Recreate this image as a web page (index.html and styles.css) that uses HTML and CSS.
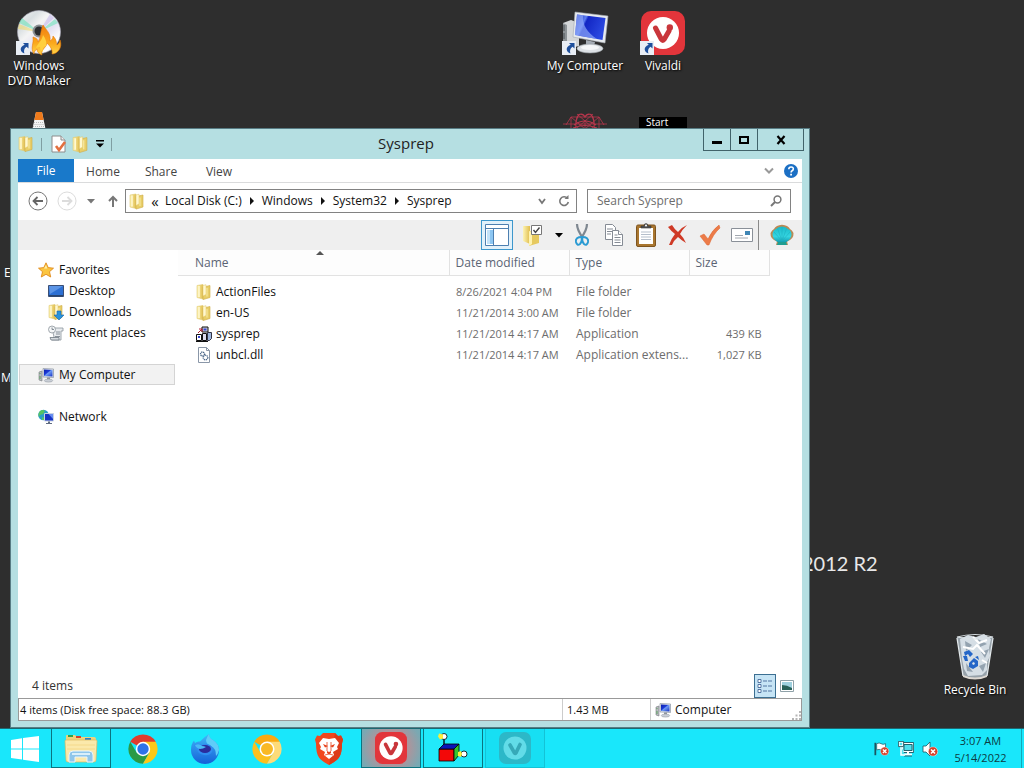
FILE: index.html
```html
<!DOCTYPE html>
<html lang="en">
	<head>
		<meta charset="utf-8" />
		<title>Sysprep</title>
		<link rel="stylesheet" href="styles.css">
	</head>
	<body>
		<!-- shared icons -->
		<svg class="defs" aria-hidden="true">
			<defs>
				<linearGradient id="gFolder" x1="0" x2="1"><stop offset="0" stop-color="#fdf3b4"/><stop offset="1" stop-color="#e0bd4c"/></linearGradient>
				<linearGradient id="gScreen" x1="0" x2="1" y2="1"><stop offset="0" stop-color="#0b1fa8"/><stop offset=".4" stop-color="#1c39d8"/><stop offset=".5" stop-color="#6f9cf5"/><stop offset="1" stop-color="#1230c4"/></linearGradient>
				<linearGradient id="gBig" x1="0" x2="1" y2=".4"><stop offset="0" stop-color="#0a18b4"/><stop offset=".35" stop-color="#5b7df0"/><stop offset=".42" stop-color="#1226c4"/><stop offset="1" stop-color="#2a48e0"/></linearGradient>
				<linearGradient id="gDisc" x1="0" x2="1" y2="1"><stop offset="0" stop-color="#f4f4f4"/><stop offset=".25" stop-color="#d9dfe2"/><stop offset=".4" stop-color="#f4f4f4"/><stop offset=".6" stop-color="#e4e1f2"/><stop offset=".8" stop-color="#ffffff"/><stop offset="1" stop-color="#a8b4c0"/></linearGradient>
				<linearGradient id="gFlame" x2="0" y2="1"><stop offset="0" stop-color="#ef7d10"/><stop offset=".6" stop-color="#fba81c"/><stop offset="1" stop-color="#ffd84a"/></linearGradient>
				<linearGradient id="gFox" x2="0" y2="1"><stop offset="0" stop-color="#3fb8f8"/><stop offset="1" stop-color="#1560d8"/></linearGradient>
				<linearGradient id="gShell" x2="0" y2="1"><stop offset="0" stop-color="#18b9c8"/><stop offset=".6" stop-color="#35d6e2"/><stop offset="1" stop-color="#0f93a8"/></linearGradient>
				<symbol id="folder" viewBox="0 0 16 16">
					<path d="M1 1.500L7 .5v14.500l-6-1.500z" fill="url(#gFolder)" stroke="#e0c972" stroke-width=".6"/>
					<path d="M3 2v11" stroke="#fff9d2" stroke-width="1.500"/>
					<path d="M7 3l7-1.500v12L7 15.600z" fill="#e8ce68" stroke="#cfab45" stroke-width=".6"/>
					<path d="M7 1.500l3-.8v9.800l-3 1.500z" fill="#fff8cf" stroke="#e3c664" stroke-width=".5"/>
					<path d="M11 4v8.500" stroke="#f6e59a" stroke-width="1.300"/>
				</symbol>
				<symbol id="computer" viewBox="0 0 16 16">
					<path d="M1 5l3-1v10l-3-1z" fill="#b9bcc0" stroke="#777b80" stroke-width=".6"/>
					<path d="M2 6v1M2 9v3" stroke="#46a04a" stroke-width=".8"/>
					<path d="M5 1.500l10.500.5v8.500L5 10z" fill="#dfe3ea" stroke="#8d96a3" stroke-width=".7"/>
					<path d="M6 2.500l8.500.4v6.600L6 9.100z" fill="url(#gScreen)"/>
					<path d="M9 10.500h3v2H9z" fill="#8e949c"/>
					<ellipse cx="10.500" cy="13.600" rx="4.200" ry="1.500" fill="#c9ced6" stroke="#8b929b" stroke-width=".5"/>
				</symbol>
				<symbol id="bigcomputer" viewBox="0 0 48 44">
					<path d="M2 12l8-3 8 3v23l-8 2-8-4z" fill="#d3d6d8"/>
					<path d="M2 12l4 2v21l-4-2z" fill="#8c9296"/>
					<path d="M3 14v6M3 22v6" stroke="#4a5054"/>
					<path d="M14 1l33 4-3 27-32-6z" fill="#e7ebef" stroke="#a4aab0" stroke-width=".6"/>
					<path d="M16 3.500l28.500 3.500-3 22-27.500-5z" fill="url(#gBig)"/>
					<path d="M16 3.500l6 .7c-1 9 4 17 14 23.800L14 24z" fill="#8fa9fa" opacity=".7"/>
					<path d="M25 29l9 2-1 4h-8z" fill="#a5acb4"/>
					<ellipse cx="29" cy="37.500" rx="13" ry="4.500" fill="#dde1e5" stroke="#949aa0" stroke-width=".6"/>
					<ellipse cx="29" cy="36.500" rx="9" ry="2.400" fill="#f5f7f8"/>
				</symbol>
				<symbol id="shortcut" viewBox="0 0 14 14">
					<path d="M0 0h14v14H0z" fill="#e9eef5"/>
					<path d="M7 2h5.500v5.500L10.600 5.800C8 7.400 7.600 9.600 8.400 12.600 4.300 11 2.600 6.600 8.700 3.800z" fill="#1e4f9c"/>
				</symbol>
				<symbol id="vivaldi" viewBox="0 0 44 44">
					<rect width="44" height="44" rx="10" fill="#e2353b"/>
					<circle cx="22" cy="22" r="16" fill="#fff"/>
					<path d="M14.500 17l6 11.500q1.300 2 2.600 0L28 20" fill="none" stroke="#c9363b" stroke-width="5" stroke-linecap="round" stroke-linejoin="round"/>
					<circle cx="28.800" cy="16.500" r="3.200" fill="#c9363b"/>
				</symbol>
				<symbol id="disc" viewBox="0 0 48 48">
					<circle cx="24" cy="23" r="21.500" fill="url(#gDisc)" stroke="#aab" stroke-width=".6"/>
					<path d="M24 23L4 14l3-5zM24 23l19-9-3-4z" fill="#6fe3bb" opacity=".6"/>
					<path d="M24 23L3 20l1-5z" fill="#f0d858" opacity=".5"/>
					<path d="M24 23L35 5l4 4z" fill="#b7a4e8" opacity=".4"/>
					<circle cx="24" cy="22" r="6.500" fill="#8b9094"/>
					<circle cx="24" cy="22" r="4.500" fill="#2b2d30"/>
					<path d="M19 45c-4-6 0-10-1-17 4 1 5 3 5 5 3-4 2-10 5-17 3 5 8 8 7 16 2-1 3-3 3-5 4 4 3 7 4 9 1-1 3-3 3-5 3 8-3 14-8 14 1-4-2-8-5-11 0 4-7 7-5 12-3-1-5-3-5-6-2 1-3 3-3 5z" fill="url(#gFlame)" stroke="#e77a0c" stroke-width=".6"/>
					<path d="M21 39c1-4 6-7 7-13 3 4 4 8 3 11-3 1-4 4-3 6-2-1-3-3-3-5-2 0-3 1-4 1z" fill="#ffcf3e"/>
				</symbol>
				<symbol id="redx" viewBox="0 0 10 10">
					<circle cx="5" cy="5" r="4.700" fill="#d6402b" stroke="#fff" stroke-width=".5"/>
					<path d="M3 3l4 4M7 3L3 7" stroke="#fff" stroke-width="1.500"/>
				</symbol>
			</defs>
		</svg>

		<main class="desktop">
			<p class="brand">2012 R2</p>

			<a class="shortcut dvd" href="#">
				<span class="pic">
					<svg width="48" height="48"><use href="#disc"/></svg>
					<svg class="arrow" width="14" height="14"><use href="#shortcut"/></svg>
				</span>
				Windows<br>DVD Maker
			</a>
			<a class="shortcut mycomputer" href="#">
				<span class="pic">
					<svg width="48" height="44"><use href="#bigcomputer"/></svg>
					<svg class="arrow" width="14" height="14"><use href="#shortcut"/></svg>
				</span>
				My Computer
			</a>
			<a class="shortcut viv" href="#">
				<span class="pic">
					<svg width="44" height="44"><use href="#vivaldi"/></svg>
					<svg class="arrow" width="14" height="14"><use href="#shortcut"/></svg>
				</span>
				Vivaldi
			</a>
			<a class="shortcut bin" href="#">
				<span class="pic">
					<svg width="44" height="48" viewBox="3 0 42 48">
						<path d="M6 4h36l-6 39q-12 5-24 0z" fill="#a9b6c0" opacity=".85"/>
						<path d="M9 6l8-4 8 2 8-3 7 5-2 9 1 8-3 6 0 8-5 5-14 1-4-7-2-10z" fill="#d5dee5"/>
						<path d="M14 8l7 4-6 6zM27 6l9 5-7 3zM30 19l8-3-4 9zM15 30l7 9-6-1zM28 33l7-3-3 9z" fill="#94a3b0"/>
						<path d="M22 4l6 6 8-3M12 14l10 2 4-4 8 9M31 27l5 3" fill="none" stroke="#fff" stroke-width="2"/>
						<path d="M6 4q18-5 36 0q-18 4-36 0z" fill="none" stroke="#d9e0e4" stroke-width="1.200"/>
						<path d="M6 5l6 38M42 5l-6 38" stroke="#e3e9ec" stroke-width="1.300"/>
						<path d="M12 42q12 5 24 0v2q-12 5-24 0z" fill="#ddd8d2"/>
						<path d="M13 19l5-2 4 4-3 3-2-3-3 2zM12 23l4 0 1 5-3 0zM18 30l5-5 4 3 0 5-5 3-4-2zM24 24l3-1 1 4z" fill="#2466c8"/>
						<path d="M21 30l2-1 1 2-2 1z" fill="#dfe7ec"/>
					</svg>
				</span>
				Recycle Bin
			</a>

			<!-- things that peek out from behind the window -->
			<svg class="peek cone" width="16" height="24" viewBox="0 0 16 24">
				<path d="M5 0h6l5 24H0z" fill="#f4f4f4"/>
				<path d="M5 0q3-1 6 0l1.600 8H3.400z" fill="#ee7a1b"/>
				<path d="M3 10.500h10M2.500 12.500h11M2 14.500h12" stroke="#bbb" stroke-dasharray="1 1"/>
			</svg>
			<svg class="peek atom" width="44" height="40" viewBox="0 0 44 40" fill="none" stroke="#b8364c">
				<path d="M8 6h28M0 13h44M8 6L3 14M36 6l5 8M8 6l14 12L36 6M14 3l16 14M30 3L14 17M22 9v10M8 6v12M36 6v12" stroke-width=".8"/>
				<path d="M13 18Q12 8 16 3.500 20 2 22 6q2-4 6-2.500 4 4.500 3 14.500M11 14q11-8 22 0M10 17q12-5 24 0" stroke-width="1.200"/>
			</svg>
			<span class="peek tile">Start</span>
			<span class="peek letter-e">E</span>
			<span class="peek letter-m">M</span>

			<section class="window">
				<header class="titlebar">
					<div class="quick">
						<svg width="16" height="16"><use href="#folder"/></svg>
						<i class="bar"></i>
						<button aria-label="Properties">
							<svg width="16" height="18" viewBox="0 0 16 18"><path d="M1 1h9l4 4v12H1z" fill="#fff" stroke="#8c8c8c"/><path d="M10 1v4h4" fill="#eee" stroke="#8c8c8c"/><path d="M5 11l3 4 6-8" fill="none" stroke="#e2703f" stroke-width="2.600"/></svg>
						</button>
						<button aria-label="New folder"><svg width="17" height="17"><use href="#folder"/></svg></button>
						<button class="customize" aria-label="Customize Quick Access Toolbar">
							<svg width="8" height="8" viewBox="0 0 8 8"><path d="M0 0h8v1.500H0zM0 3.500h8L4 7.500z"/></svg>
						</button>
						<i class="bar"></i>
					</div>
					<h1>Sysprep</h1>
					<div class="caption">
						<button aria-label="Minimize"><svg width="10" height="10" viewBox="0 0 10 10"><path d="M0 6h10v3H0z"/></svg></button>
						<button aria-label="Maximize"><svg width="10" height="10" viewBox="0 0 10 10"><path d="M1 2h8v6H1z" fill="none" stroke="#000" stroke-width="2"/></svg></button>
						<button class="close" aria-label="Close"><svg width="10" height="10" viewBox="0 0 10 10"><path d="M1.500 1l7 8M8.500 1l-7 8" stroke="#000" stroke-width="2.200"/></svg></button>
					</div>
				</header>

				<div class="client">
					<nav class="ribbon">
						<button class="file">File</button>
						<button>Home</button>
						<button>Share</button>
						<button>View</button>
						<span class="grow"></span>
						<button class="mini" aria-label="Expand the Ribbon"><svg width="10" height="8" viewBox="0 0 10 8"><path d="M1 1.500l4 4 4-4" fill="none" stroke="#999" stroke-width="2"/></svg></button>
						<button class="mini" aria-label="Help">
							<svg width="14" height="14" viewBox="0 0 14 14"><circle cx="7" cy="7" r="7" fill="#1b6fc4"/><path d="M4.800 5.200q0-2.200 2.300-2.200t2.200 2q0 1.200-1.200 1.800-1 .5-1 1.700" fill="none" stroke="#fff" stroke-width="1.600"/><path d="M6.200 9.800h1.800v1.700H6.200z" fill="#fff"/></svg>
						</button>
					</nav>

					<div class="address">
						<button class="nav" aria-label="Back"><svg width="20" height="20" viewBox="0 0 20 20"><circle cx="10" cy="10" r="9" fill="none" stroke="#777"/><path d="M15 10H6M9.500 6L5.500 10l4 4" fill="none" stroke="#666" stroke-width="1.800"/></svg></button>
						<button class="nav" aria-label="Forward"><svg width="20" height="20" viewBox="0 0 20 20"><circle cx="10" cy="10" r="9" fill="none" stroke="#dcdcdc"/><path d="M5 10h9M10.500 6l4 4-4 4" fill="none" stroke="#dcdcdc" stroke-width="1.800"/></svg></button>
						<button class="nav recent" aria-label="Recent locations"><svg width="8" height="5" viewBox="0 0 8 5"><path d="M0 0h8L4 4.500z" fill="#777"/></svg></button>
						<button class="nav up" aria-label="Up"><svg width="10" height="12" viewBox="0 0 10 12"><path d="M5 12V2M1 6l4-4 4 4" fill="none" stroke="#777" stroke-width="2"/></svg></button>
						<div class="path">
							<svg width="16" height="17"><use href="#folder"/></svg>
							<button class="back2">«</button>
							<button>Local Disk (C:)</button><i class="tri"></i>
							<button>Windows</button><i class="tri"></i>
							<button>System32</button><i class="tri"></i>
							<button>Sysprep</button>
							<span class="grow"></span>
							<button aria-label="Previous locations"><svg width="8" height="7" viewBox="0 0 8 7"><path d="M1 1l3 4 3-4" fill="none" stroke="#777" stroke-width="1.800"/></svg></button>
							<button class="refresh" aria-label="Refresh"><svg width="12" height="12" viewBox="0 0 12 12"><path d="M9.500 3.500A4.300 4.300 0 1 0 10.300 7" fill="none" stroke="#777" stroke-width="1.600"/><path d="M6.500 4h4V0z" fill="#777"/></svg></button>
						</div>
						<label class="search">
							<input type="text" placeholder="Search Sysprep" aria-label="Search Sysprep">
							<svg width="12" height="12" viewBox="0 0 12 12"><circle cx="7.500" cy="4.500" r="3.400" fill="none" stroke="#777" stroke-width="1.500"/><path d="M5 7L1 11" stroke="#777" stroke-width="2"/></svg>
						</label>
					</div>

					<div class="toolbar">
						<button class="on" aria-label="Navigation pane">
							<svg width="24" height="22" viewBox="0 0 24 22"><path d="M.5.500h23v21H.5z" fill="#fff" stroke="#4d7fb0"/><path d="M1 4.500h22" stroke="#4d7fb0"/><path d="M2 6h6v14H2z" fill="#8cc6f2"/><path d="M2 6h3v14H2z" fill="#c4e2f8"/><path d="M8.500 5v16" stroke="#4d7fb0"/></svg>
						</button>
						<button class="options" aria-label="Folder options">
							<svg width="22" height="24" viewBox="0 0 22 24"><path d="M1 3h7v18l-7-3z" fill="url(#gFolder)"/><path d="M7 8l10 1v11l-10 3z" fill="#e6c95f"/><path d="M7 8l3 1v12l-3 2z" fill="#fff3b0"/><path d="M9.500 2.500h10v9h-10z" fill="#fff" stroke="#777"/><path d="M11.500 7l2 2.500 4-5" fill="none" stroke="#444" stroke-width="1.400"/></svg>
						</button>
						<button class="drop" aria-label="More options"><svg width="8" height="5" viewBox="0 0 8 5"><path d="M0 0h8L4 4.500z"/></svg></button>
						<button aria-label="Cut">
							<svg width="16" height="24" viewBox="0 0 16 24"><path d="M3 1q0 6 6 14M13 1q0 6-6 14" fill="none" stroke="#7e8790" stroke-width="2.200"/><path d="M8 14Q1 14 2 19q1 4 4 2 2-2 2-7M8 14q7 0 6 5-1 4-4 2-2-2-2-7" fill="none" stroke="#2b9bd3" stroke-width="2"/></svg>
						</button>
						<button aria-label="Copy">
							<svg width="20" height="24" viewBox="0 0 20 24"><g fill="#fff" stroke="#858b94"><path d="M1.500 1.500h7l3 3v12h-10z"/><path d="M3 6h6M3 8.500h6M3 11h4"/><path d="M8.500 7.500h6l4 4v11h-10z"/><path d="M14.500 7.500v4h4M10.500 12h3M10.500 14.500h6M10.500 17h6M10.500 19.500h6"/></g></svg>
						</button>
						<button aria-label="Paste">
							<svg width="20" height="24" viewBox="0 0 20 24"><rect x=".5" y="2" width="19" height="21.500" rx="1.500" fill="#a9762f" stroke="#7e5520"/><path d="M3 5h14v16H3z" fill="#fff"/><path d="M5 9h10M5 11.500h10M5 14h10M5 16.500h10" stroke="#b5bfcb"/><path d="M5 5V3h3q0-2.500 2-2.500T12 3h3v2z" fill="#555" stroke="#333" stroke-width=".6"/><circle cx="10" cy="2.500" r="1" fill="#fff"/></svg>
						</button>
						<button aria-label="Delete">
							<svg width="22" height="22" viewBox="0 0 22 22"><path d="M1 3l4-2q3 5 6 7 4-5 9-7-5 5-7 9 4 4 6 9-5-3-8-6-4 3-6 8H2q2-6 6-11-4-3-7-7z" fill="#cf3a26"/></svg>
						</button>
						<button aria-label="Properties">
							<svg width="22" height="22" viewBox="0 0 22 22"><path d="M1 12l4-2 4 5Q13 6 20 1l1 3Q14 10 10 21H8z" fill="#ec7b48" stroke="#dc6632" stroke-width=".5"/></svg>
						</button>
						<button aria-label="Rename">
							<svg width="22" height="14" viewBox="0 0 22 14"><path d="M.5.500h21v13H.5z" fill="#fff" stroke="#8a9098"/><path d="M14 3h5v4h-5z" fill="#3f86b5"/><path d="M4 7.500h8M4 10h13" stroke="#a2a8b0"/></svg>
						</button>
						<i class="sep"></i>
						<button aria-label="Classic Shell">
							<svg width="24" height="22" viewBox="0 0 24 22"><path d="M7 17.500Q0 15 .5 9 2 6 4 5 6 1 12 .7 18 1 20 5q2 1 3.500 4 .5 6-6.500 8.500l1 3.500H6z" fill="#b98a56"/><path d="M9 19Q2 15 2.500 10q.5-4 3.500-5 2-2.500 6-2.500T18 5q3 1 3.500 5 .5 5-6.500 9z" fill="url(#gShell)"/><path d="M12 17V3M12 17L7.500 4.500M12 17l4.500-12.500M12 17L4 8M12 17l8-9" stroke="#1fb0c0" stroke-width=".6"/><path d="M8 18h8l1 3H7z" fill="#1f9e92"/></svg>
						</button>
					</div>

					<div class="body">
						<nav class="tree">
							<a href="#">
								<svg width="16" height="16" viewBox="0 0 16 16"><path d="M8 .8l2.200 4.800 5.300.6-4 3.500 1.200 5.300L8 12.300 3.300 15l1.200-5.300-4-3.500 5.300-.6z" fill="#fbc540" stroke="#e08a1c" stroke-width=".9"/><path d="M8 3l1.300 3.500H6z" fill="#fff0a8"/></svg>
								Favorites
							</a>
							<a class="sub" href="#">
								<svg width="16" height="16" viewBox="0 0 16 16"><path d="M.5 2.500h15v11H.5z" fill="#2d70d3" stroke="#3b4f75"/><path d="M1 3h14L2 11z" fill="#5c95e6"/><path d="M1 12h14v1.500H1z" fill="#29456f"/></svg>
								Desktop
							</a>
							<a class="sub" href="#">
								<svg width="16" height="16" viewBox="0 0 16 16"><use href="#folder"/><path d="M9 7h4v4h3l-5 5-5-5h3z" fill="#2892dd" stroke="#1766a8" stroke-width=".6"/></svg>
								Downloads
							</a>
							<a class="sub" href="#">
								<svg width="16" height="16" viewBox="0 0 16 16"><path d="M4 3h11v3h-2v9H4l2-3z" fill="#e8ebee" stroke="#8b949c" stroke-width=".8"/><circle cx="4" cy="4.500" r="3.500" fill="#f4f6f7" stroke="#8b949c" stroke-width=".8"/><path d="M4 2.500v2h2M8 7h4M8 9h4M7 11.500h5M2 12.500h9v2.500H3z" fill="#d6dbdf" stroke="#707a83" stroke-width=".8"/></svg>
								Recent places
							</a>
							<a class="group current" href="#"><svg width="16" height="16"><use href="#computer"/></svg>My Computer</a>
							<a class="group" href="#">
								<svg width="16" height="16" viewBox="0 0 16 16"><circle cx="5.500" cy="6" r="5.300" fill="#2a9fc7"/><path d="M2 2q3-2 5 0L5 5 2 6 1 8Q-.5 5 2 2zM4 8l3 1-1 2H4z" fill="#56c364"/><path d="M6.500 4.500h9v7.500h-9z" fill="#1733c4" stroke="#c8d2e2"/><path d="M10.500 5h4.500v5z" fill="#668cf0"/><path d="M10 12.500h2v1.500h2v1H8v-1h2z" fill="#5f6b80"/></svg>
								Network
							</a>
						</nav>

						<div class="list">
							<table>
								<colgroup><col class="c-name"><col class="c-date"><col class="c-type"><col class="c-size"></colgroup>
								<thead>
									<tr><th class="sorted">Name</th><th>Date modified</th><th>Type</th><th>Size</th></tr>
								</thead>
								<tbody>
									<tr><td><span class="cell"><svg width="16" height="16"><use href="#folder"/></svg>ActionFiles</span></td><td>8/26/2021 4:04 PM</td><td>File folder</td><td></td></tr>
									<tr><td><span class="cell"><svg width="16" height="16"><use href="#folder"/></svg>en-US</span></td><td>11/21/2014 3:00 AM</td><td>File folder</td><td></td></tr>
									<tr>
										<td><span class="cell">
											<svg width="16" height="16" viewBox="0 0 16 16"><path d="M6 1h6v5H6z" fill="#c9cdd8" stroke="#111"/><path d="M7.500 2.500h3v2h-3z" fill="#3546d0"/><path d="M.5 8.500h5v6h-5z" fill="#fff" stroke="#111"/><path d="M2 10h2v2H2z" fill="#3546d0"/><path d="M6.500 7.500h4v7h-4z" fill="#dde" stroke="#111"/><path d="M11.500 6.500h4v6l-2 2h-2z" fill="#9db6dd" stroke="#334"/><path d="M2 7l4-4M3 3h3v3" fill="none" stroke="#b02030"/><path d="M0 15.500h12" stroke="#111"/></svg>
											sysprep</span></td>
										<td>11/21/2014 4:17 AM</td><td>Application</td><td>439 KB</td>
									</tr>
									<tr>
										<td><span class="cell">
											<svg width="16" height="16" viewBox="0 0 16 16"><path d="M2.500.500h8l3 3v12h-11z" fill="#fff" stroke="#8a97a8"/><path d="M10.500.500v3h3" fill="none" stroke="#8a97a8"/><circle cx="6.500" cy="7" r="2" fill="none" stroke="#4b6688" stroke-width="1.300" stroke-dasharray="1.200 .6"/><circle cx="9.500" cy="10.500" r="2.300" fill="none" stroke="#4b6688" stroke-width="1.300" stroke-dasharray="1.200 .6"/></svg>
											unbcl.dll</span></td>
										<td>11/21/2014 4:17 AM</td><td>Application extens...</td><td>1,027 KB</td>
									</tr>
								</tbody>
							</table>
						</div>
					</div>

					<div class="details">
						<span>4 items</span>
						<span class="grow"></span>
						<button class="on" aria-label="Details view">
							<svg width="16" height="16" viewBox="0 0 16 16"><g fill="#fff" stroke="#46699a" stroke-width=".9"><path d="M1 1.500h3v3H1zM1 6.500h3v3H1zM1 11.500h3v3H1z"/><path d="M6 3h4M11 3h4M6 8h4M11 8h4M6 13h4M11 13h4"/></g></svg>
						</button>
						<button aria-label="Large icons view">
							<svg width="14" height="12" viewBox="0 0 14 12"><path d="M.5.500h13v11H.5z" fill="#fff" stroke="#8fa1a8"/><path d="M2 2h10v8H2z" fill="#9ed0de"/><path d="M2 5q5 0 10 3v2H2z" fill="#286058"/></svg>
						</button>
					</div>

					<footer class="status">
						<span class="grow free">4 items (Disk free space: 88.3 GB)</span>
						<span class="size">1.43 MB</span>
						<span class="zone"><svg width="16" height="16"><use href="#computer"/></svg>Computer
							<svg class="grip" width="9" height="9" viewBox="0 0 9 9"><path d="M7 0h2v2H7zM7 3.500h2v2H7zM3.500 3.500h2v2h-2zM7 7h2v2H7zM3.500 7h2v2h-2zM0 7h2v2H0z" fill="#b5b5b5"/></svg>
						</span>
					</footer>
				</div>
			</section>
		</main>

		<footer class="taskbar">
			<button class="start" aria-label="Start">
				<svg width="28" height="26" viewBox="0 0 28 26" fill="#fff"><path d="M0 4l11-1.700V12.400H0zM12 2.100L28 0v12.400H12zM0 13.600h11v10L0 22zM12 13.600h16V26l-16-2.200z"/></svg>
			</button>
			<button class="open" aria-label="File Explorer">
				<svg width="34" height="30" viewBox="0 0 34 30"><path d="M2 3q0-1 1-1h8l2 2h17q2 0 2 2v20q0 2-2 2H4q-2 0-2-2z" fill="#efd27c"/><path d="M4 2h5v2H4z" fill="#2fa24a"/><path d="M12 3h5v2h-5z" fill="#d3402d"/><path d="M21 5h6v2h-6z" fill="#2f7fc4"/><path d="M1 8q0-1 1-1h30q1 0 1 1l-1 19q0 2-2 2H4q-2 0-2-2z" fill="#fbe9ab" stroke="#dcb95f" stroke-width=".7"/><path d="M3 12h28M3 16h28" stroke="#f4d98b"/><path d="M5 29v-7q0-4 4-4h16q4 0 4 4v7h-6v-5H11v5z" fill="#8fc6ea" stroke="#e9f5fc"/><path d="M8 21h18" stroke="#d9effa" stroke-width="2"/></svg>
			</button>
			<button aria-label="Google Chrome">
				<svg width="30" height="30" viewBox="0 0 30 30"><path d="M15 15L2.300 7.700A14.700 14.700 0 0 1 27.700 7.700z" fill="#e03b2e"/><path d="M2.300 7.700A14.700 14.700 0 0 0 15 29.700L21.300 18.700 8.700 18.700z" fill="#2a9a46"/><path d="M27.700 7.700H15l6.300 11L15 29.700A14.700 14.700 0 0 0 27.700 7.700z" fill="#fbc818"/><circle cx="15" cy="15" r="7.200" fill="#fff"/><circle cx="15" cy="15" r="5.700" fill="#2f73e8"/></svg>
			</button>
			<button aria-label="Firefox Developer Edition">
				<svg width="30" height="32" viewBox="0 0 30 32"><path d="M1 17Q1 11 4 7.500l1 2.500q2-2 5-1.500Q14 4 19 1q0 4 4 6 6 4 6 10A14 14 0 0 1 1 17z" fill="url(#gFox)"/><path d="M19 1q0 4 4 6 6 4 6 10-1 4-3 6 0-8-5-10t-5-6q1-3 3-6z" fill="#5fccf8"/><path d="M4 12q4-3 8 0 4-2 8 0 4 3 2 7-3 4-8 3-6-1-7-5-3-2-3-5z" fill="#2f8cf0"/><ellipse cx="15" cy="16" rx="6" ry="4" fill="#2a2c9c"/><path d="M5 12q4-2 7 1 2 0 4 1-3 2-6 2-4-1-5-4z" fill="#48baf6"/></svg>
			</button>
			<button aria-label="Chrome Canary">
				<svg width="30" height="30" viewBox="0 0 30 30"><path d="M15 15L2.300 7.700A14.700 14.700 0 0 1 27.700 7.700z" fill="#f8a912"/><path d="M2.300 7.700A14.700 14.700 0 0 0 15 29.700L21.300 18.700 8.700 18.700z" fill="#fbc01f"/><path d="M27.700 7.700H15l6.300 11L15 29.700A14.700 14.700 0 0 0 27.700 7.700z" fill="#fddb78"/><circle cx="15" cy="15" r="7.500" fill="#fff"/><circle cx="15" cy="15" r="6" fill="#f9b924"/></svg>
			</button>
			<button aria-label="Brave">
				<svg width="28" height="32" viewBox="0 0 28 32"><path d="M8 0h12l3 3 3-.5 2 4-1 4q0 10-3 14-2 3-10 7.500-8-4.500-10-7.500-3-4-3-14l-1-4 2-4L5 3z" fill="#f1471d"/><path d="M20 0l3 3 3-.5 2 4-1 4q0 10-3 14-2 3-10 7.500z" fill="#dd3b19"/><path d="M8 5l6 1 6-1 4 5-2 4 1 2-5 3 1 3-5 4-5-4 1-3-5-3 1-2-2-4z" fill="#fff"/><path d="M8 11l5 2-3 1.500zM20 11l-5 2 3 1.500zM12 18l2 1 2-1v2l-2 1.500-2-1.500z" fill="#e6421c"/><path d="M12 9v9M16 9v9M10 22l4-1 4 1" fill="none" stroke="#e6421c" stroke-width=".8"/></svg>
			</button>
			<button class="open active" aria-label="Vivaldi"><svg width="32" height="32"><use href="#vivaldi"/></svg></button>
			<button class="open" aria-label="Classic cube">
				<svg width="30" height="30" viewBox="0 0 30 30" stroke="#000" stroke-width=".8"><path d="M6 4v9M20 21h5" stroke-width="1.300"/><path d="M1 16h15v12H1z" fill="#f30808"/><path d="M1 16l5-5h15l-5 5z" fill="#0a14b8"/><path d="M16 16l5-5v11l-5 6z" fill="#35c52c"/><circle cx="6" cy="3.500" r="3" fill="#fff"/><path d="M5 1.500L1 .5l-1 3 2 3 3-1z" fill="#f8ef3c" stroke="none"/><circle cx="26" cy="21" r="3" fill="#fff"/><path d="M23 18l-3 1v4l3 1 1-3z" fill="#f8ef3c" stroke="none"/></svg>
			</button>
			<button class="open faded" aria-label="Vivaldi background">
				<svg width="32" height="32" viewBox="0 0 32 32"><rect width="32" height="32" rx="7" fill="#2cb8c8"/><circle cx="16" cy="16" r="11.500" fill="#62dce8"/><path d="M11 13l4.500 8q.7 1 1.400 0L21 12.500" fill="none" stroke="#36a9b8" stroke-width="3.600" stroke-linecap="round"/></svg>
			</button>
			<span class="grow"></span>
			<div class="tray">
				<button aria-label="Action Center">
					<svg width="16" height="16" viewBox="0 0 18 16"><path d="M1.500 1v14" stroke="#1c5560" stroke-width="2"/><path d="M3 2q3-1.500 5 0t5 0v7q-3 1-5 0t-5 0z" fill="#fff" stroke="#1c5560" stroke-width=".8"/><svg x="7" y="5.500" width="10" height="10"><use href="#redx"/></svg></svg>
				</button>
				<button aria-label="Network">
					<svg width="16" height="16" viewBox="0 0 16 16"><path d="M4.500 2.500h11v8h-11z" fill="#4fe0ee" stroke="#fff" stroke-width="1.600"/><path d="M3.600 1.500h12v10H3.600M6 3.500h8v6H6z" fill="none" stroke="#1c5560" stroke-width=".9"/><path d="M10 11v2M6 13.500h8" stroke="#fff" stroke-width="2"/><path d="M6 15h8" stroke="#1c5560" stroke-width=".9"/><path d="M1 1h4v4H1zM3 5v9h4" fill="#4fe0ee" stroke="#fff" stroke-width="1.500"/><path d="M.4.400h5.200v5.200H.4z" fill="none" stroke="#1c5560" stroke-width=".9"/></svg>
				</button>
				<button aria-label="Volume">
					<svg width="16" height="16" viewBox="0 0 16 16"><path d="M1 5h3l4-4v14l-4-4H1z" fill="#fff" stroke="#1c5560" stroke-width=".8"/><svg x="6" y="5.500" width="10" height="10"><use href="#redx"/></svg></svg>
				</button>
			</div>
			<button class="clock">3:07 AM<br>5/14/2022</button>
		</footer>
	</body>
</html>
```
FILE: styles.css
```css
* {
	padding: 0;
	margin: 0;
	box-sizing: border-box;
}

body {
	height: 100vh;
	display: flex;
	flex-direction: column;
	overflow: hidden;
	background-color: #2e2e2e;
	font: 12px/16px "Open Sans", "Noto Sans", sans-serif;
	color: #111;
}

button,
input {
	font: inherit;
	color: inherit;
	background: none;
	border: 0;
}

button {
	display: flex;
	align-items: center;
	justify-content: center;
}

a {
	color: inherit;
	text-decoration: none;
}

svg {
	display: block;
	flex: none;
}

.defs {
	position: absolute;
	width: 0;
	height: 0;
}

.grow {
	flex: 1;
}

/* desktop */
.desktop {
	flex: 1;
	position: relative;
	min-height: 0;
}

.brand {
	position: absolute;
	left: 802px;
	top: 550px;
	font-family: Lato, sans-serif;
	font-size: 20px;
	line-height: 26px;
	color: #e8e8e8;
}

.shortcut {
	position: absolute;
	width: 78px;
	text-align: center;
	line-height: 15px;
	color: #fff;
	text-shadow: 1px 1px 2px #000;
}

.shortcut .pic {
	position: relative;
	display: flex;
	align-items: center;
	justify-content: center;
	height: 50px;
}

.shortcut .arrow {
	position: absolute;
	left: 16px;
	bottom: 3px;
}

.dvd {
	left: 0;
	top: 8px;
}

.mycomputer {
	left: 546px;
	top: 8px;
}

.viv {
	left: 624px;
	top: 8px;
}

.bin {
	right: 10px;
	bottom: 31px;
}

.peek {
	position: absolute;
	color: #fff;
}

.cone {
	left: 31px;
	top: 112px;
}

.atom {
	left: 563px;
	top: 111px;
}

.tile {
	left: 639px;
	top: 117px;
	width: 48px;
	height: 24px;
	padding-left: 7px;
	background-color: #000;
	font-size: 10px;
	line-height: 11px;
}

.letter-e {
	left: 4px;
	top: 265px;
}

.letter-m {
	left: 1px;
	top: 370px;
}

/* explorer window */
.window {
	position: absolute;
	left: 10px;
	right: 214px;
	top: 128px;
	bottom: 0;
	display: flex;
	flex-direction: column;
	padding: 0 7px 6px;
	background-color: #b5dfe2;
	border: 1px solid #587c84;
}

.titlebar {
	display: grid;
	grid-template-columns: 1fr auto 1fr;
	height: 30px;
}

.titlebar h1 {
	padding-right: 8px;
	font-size: 15px;
	line-height: 29px;
	font-weight: normal;
	color: #222;
}

.quick {
	display: flex;
	align-items: center;
	gap: 5px;
}

.quick .bar {
	width: 1px;
	height: 13px;
	background-color: #7f9ea2;
}

.quick .bar:nth-of-type(1) {
	margin: 0 4px 0 2px;
}

.customize {
	width: 12px;
}

.caption {
	display: flex;
	justify-self: end;
	height: 22px;
	margin-right: -2px;
	border: 1px solid #41636a;
	border-top: 0;
}

.caption button {
	width: 27px;
	border-right: 1px solid #41636a;
}

.caption .close {
	width: 45px;
	border-right: 0;
}

.client {
	flex: 1;
	min-height: 0;
	display: flex;
	flex-direction: column;
	background-color: #fff;
}

.ribbon {
	display: flex;
	height: 24px;
	border-bottom: 1px solid #dadbdc;
	color: #444;
}

.ribbon button {
	width: 58px;
	padding-top: 3px;
}

.ribbon .file {
	width: 56px;
	padding-top: 1px;
	color: #fff;
	background-color: #1979ca;
}

.ribbon .mini {
	width: 22px;
	padding-top: 0;
}

.address {
	display: flex;
	align-items: center;
	height: 37px;
	padding: 0 11px 1px 10px;
}

.nav {
	width: 20px;
	margin-right: 9px;
}

.recent {
	width: 10px;
	margin-right: 11px;
}

.up {
	width: 12px;
	margin-right: 6px;
}

.path {
	flex: 1;
	display: flex;
	align-items: center;
	height: 24px;
	padding: 0 6px 0 3px;
	border: 1px solid #828282;
}

.back2 {
	width: 20px;
	font-size: 15px;
}

.tri {
	margin: 0 8px;
	border: 4px solid transparent;
	border-left-color: #111;
	border-right-width: 0;
}

.refresh {
	margin-left: 12px;
}

.search {
	display: flex;
	align-items: center;
	width: 204px;
	height: 24px;
	margin-left: 10px;
	padding: 0 8px 0 9px;
	border: 1px solid #828282;
}

.search input {
	flex: 1;
	min-width: 0;
	outline: 0;
}

.search input::placeholder {
	color: #6d6d6d;
}

.toolbar {
	display: flex;
	justify-content: flex-end;
	height: 30px;
	padding-right: 4px;
	background-color: #efefef;
}

.toolbar button {
	width: 32px;
}

.toolbar .on {
	background-color: #e2f1fa;
	border: 1px solid #3d97cc;
}

.toolbar .options {
	width: 39px;
}

.toolbar .drop {
	width: 14px;
}

.toolbar .sep {
	width: 1px;
	margin-right: 7px;
	background-color: #8a8a8a;
}

.body {
	flex: 1;
	min-height: 0;
	display: flex;
}

.tree {
	width: 160px;
	padding: 9px 3px 0 1px;
	color: #111;
}

.tree a {
	display: flex;
	align-items: center;
	gap: 5px;
	height: 21px;
	padding-left: 19px;
}

.tree .sub {
	padding-left: 29px;
}

.tree .group {
	margin-top: 21px;
}

.tree .current {
	padding-left: 18px;
	background-color: #f2f2f2;
	border: 1px solid #d4d4d4;
}

.list {
	flex: 1;
}

table {
	width: 592px;
	table-layout: fixed;
	border-collapse: collapse;
	color: #6d6d6d;
	white-space: nowrap;
}

.c-name {
	width: 271px;
}

.c-date,
.c-type {
	width: 120px;
}

th {
	height: 25px;
	padding: 1px 0 0 6px;
	text-align: left;
	font-weight: normal;
	color: #5a6474;
	background-color: #fdfdfd;
	border-right: 1px solid #e2e2e2;
	border-bottom: 1px solid #e2e2e2;
}

.sorted {
	position: relative;
	padding-left: 17px;
}

.sorted::after {
	content: "";
	position: absolute;
	left: 51%;
	top: 1px;
	border: 4px solid transparent;
	border-bottom-color: #555;
	border-top-width: 0;
}

tbody::before {
	content: "";
	display: block;
	height: 6px;
}

td {
	height: 21px;
	padding-left: 7px;
}

td:nth-child(2),
td:last-child {
	font-size: 11px;
}

td:last-child {
	padding-right: 8px;
	text-align: right;
}

.cell {
	display: flex;
	align-items: center;
	gap: 4px;
	padding-left: 11px;
	color: #111;
}

.details {
	display: flex;
	align-items: center;
	height: 24px;
	padding: 0 4px 0 14px;
	color: #333;
}

.details button {
	width: 22px;
	height: 24px;
}

.details .on {
	background-color: #c6e4f5;
	border: 1px solid #3c6f92;
}

.status {
	display: flex;
	align-items: center;
	height: 23px;
	border: 1px solid #999;
}

.status span {
	display: flex;
	align-items: center;
	height: 21px;
	padding-left: 1px;
}

.status .free,
.status .size {
	font-size: 11px;
}

.status .size {
	width: 88px;
	padding-left: 4px;
	border-left: 1px solid #ccc;
}

.status .zone {
	width: 151px;
	gap: 4px;
	padding-left: 4px;
	border-left: 1px solid #ccc;
}

.grip {
	margin-left: auto;
	align-self: flex-end;
}

/* taskbar */
.taskbar {
	display: flex;
	gap: 2px;
	height: 40px;
	background-color: #19e7fb;
	border-top: 1px solid #1c6872;
	padding-right: 2px;
}

.taskbar > button {
	width: 60px;
}

.taskbar .start {
	width: 49px;
}

.taskbar .open {
	border: 1px solid #0b7480;
	border-top: 0;
	background-color: #22e9fa;
}

.taskbar .active {
	background: radial-gradient(circle, #c98a90 30%, #78a9b3 90%);
}

.taskbar .faded {
	border-color: #14c3d6;
	background-color: #17dff3;
}

.tray {
	display: flex;
	align-items: center;
	gap: 8px;
}

.taskbar .clock {
	width: 82px;
	font-size: 11px;
	line-height: 17px;
	color: #0c3b42;
	border-right: 1px solid #12a9b8;
}
```
